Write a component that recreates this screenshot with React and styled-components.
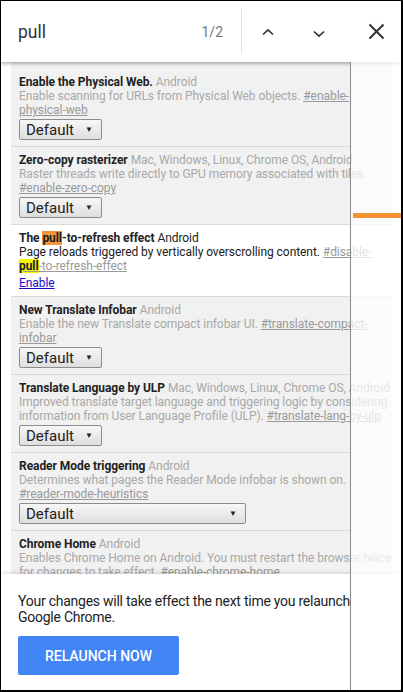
import React from "react";
import styled, { createGlobalStyle } from "styled-components";

const GlobalStyle = createGlobalStyle`
  body {
    margin: 0;
    font-family: Roboto, "Noto Sans", Arial, sans-serif;
    background: #fff;
  }
`;

const flags = [
  {
    title: "Enable the Physical Web.",
    platforms: "Android",
    desc: "Enable scanning for URLs from Physical Web objects.",
    hash: "#enable-physical-web",
    select: "narrow",
  },
  {
    title: "Zero-copy rasterizer",
    platforms: "Mac, Windows, Linux, Chrome OS, Android",
    desc: "Raster threads write directly to GPU memory associated with tiles.",
    hash: "#enable-zero-copy",
    select: "narrow",
  },
  { active: true },
  {
    title: "New Translate Infobar",
    platforms: "Android",
    desc: "Enable the new Translate compact infobar UI.",
    hash: "#translate-compact-infobar",
    select: "narrow",
  },
  {
    title: "Translate Language by ULP",
    platforms: "Mac, Windows, Linux, Chrome OS, Android",
    desc: "Improved translate target language and triggering logic by considering information from User Language Profile (ULP).",
    hash: "#translate-lang-by-ulp",
    select: "narrow",
  },
  {
    title: "Reader Mode triggering",
    platforms: "Android",
    desc: "Determines what pages the Reader Mode infobar is shown on.",
    hash: "#reader-mode-heuristics",
    select: "wide",
  },
  {
    title: "Chrome Home",
    platforms: "Android",
    desc: "Enables Chrome Home on Android. You must restart the browser twice for changes to take effect.",
    hash: "#enable-chrome-home",
  },
];

const App = () => (
  <>
    <GlobalStyle />
    <Frame>
      <FindBar>
        <Query>pull</Query>
        <Count>1/2</Count>
        <Divider />
        <IconButton $w={52}>
          <svg width="12" height="8" viewBox="0 0 12 8">
            <polyline points="1,6.5 6,1.8 11,6.5" fill="none" stroke="#333" strokeWidth="1.7" />
          </svg>
        </IconButton>
        <IconButton $w={50} $down>
          <svg width="12" height="8" viewBox="0 0 12 8">
            <polyline points="1,1.5 6,6.2 11,1.5" fill="none" stroke="#333" strokeWidth="1.7" />
          </svg>
        </IconButton>
        <IconButton $w={57} $pad={7}>
          <svg width="17" height="17" viewBox="0 0 17 17">
            <path d="M1.5 1.5 L15.5 15.5 M15.5 1.5 L1.5 15.5" stroke="#333" strokeWidth="2" />
          </svg>
        </IconButton>
      </FindBar>

      <List>
        <Entries>
          {flags.map((f, i) =>
            f.active ? (
              <Entry key={i} $active>
                <Title>
                  The <Current>pull</Current>-to-refresh effect <Platform $active>Android</Platform>
                </Title>
                <Desc $active>
                  Page reloads triggered by vertically overscrolling content.{" "}
                  <Hash>
                    #disable-<Match>pull</Match>-to-refresh-effect
                  </Hash>
                </Desc>
                <EnableLink>Enable</EnableLink>
              </Entry>
            ) : (
              <Entry key={i}>
                <Title>
                  {f.title} <Platform>{f.platforms}</Platform>
                </Title>
                <Desc>
                  {f.desc} <Hash>{f.hash}</Hash>
                </Desc>
                {f.select && (
                  <Select $wide={f.select === "wide"}>
                    <span>Default</span>
                    <Arrow>▼</Arrow>
                  </Select>
                )}
              </Entry>
            )
          )}
        </Entries>
      </List>

      <Infobar>
        <InfoText>
          Your changes will take effect the next time you relaunch Google Chrome.
        </InfoText>
        <Relaunch>RELAUNCH NOW</Relaunch>
      </Infobar>

      <Overscroll>
        <Glow />
      </Overscroll>
    </Frame>
  </>
);

export default App;

const Frame = styled.div`
  position: relative;
  box-sizing: border-box;
  width: 403px;
  height: 692px;
  border: solid #000;
  border-width: 1px 2px 2px 1px;
  display: flex;
  flex-direction: column;
  overflow: hidden;
  background: #fff;
`;

const FindBar = styled.div`
  position: relative;
  z-index: 2;
  flex-shrink: 0;
  height: 61px;
  display: flex;
  align-items: center;
  background: #fff;
  box-shadow: 0 2px 3px rgba(0, 0, 0, 0.28);
`;

const Query = styled.div`
  flex: 1;
  padding-left: 17px;
  font-size: 17.5px;
  color: #333;
  margin-top: 1px;
`;

const Count = styled.div`
  margin-right: 18px;
  font-size: 14px;
  color: #777;
`;

const Divider = styled.div`
  width: 1px;
  align-self: stretch;
  margin: 8px 0 9px;
  background: #e2e2e2;
`;

const IconButton = styled.div`
  width: ${(p) => p.$w}px;
  box-sizing: border-box;
  padding-left: ${(p) => p.$pad || 0}px;
  display: flex;
  justify-content: center;
  align-items: center;
  margin-top: ${(p) => (p.$down ? 4 : 0)}px;
`;

const List = styled.div`
  flex: 1;
  overflow: hidden;
  padding: 0 9px 0 10px;
`;

const Entries = styled.div`
  background: #f1f1f1;
  padding-top: 7px;
`;

const Entry = styled.div`
  padding: 6px 0 6px 8px;
  border-bottom: 1px solid #dadada;
  background: ${(p) => (p.$active ? "#fff" : "transparent")};
  font-size: 12px;
  letter-spacing: -0.06px;
  line-height: 14px;
`;

const Title = styled.div`
  font-weight: bold;
  color: #222;
`;

const Platform = styled.span`
  font-weight: normal;
  color: ${(p) => (p.$active ? "#222" : "#a8a8a8")};
`;

const Desc = styled.div`
  color: ${(p) => (p.$active ? "#222" : "#a8a8a8")};
`;

const Hash = styled.span`
  color: #999;
  text-decoration: underline;
`;

const Current = styled.span`
  background: #f4943a;
`;

const Match = styled.span`
  background: #f4f400;
  color: #222;
  font-weight: bold;
`;

const EnableLink = styled.div`
  margin-top: 3px;
  color: #1a0dce;
  text-decoration: underline;
  line-height: 14px;
`;

const Select = styled.div`
  box-sizing: border-box;
  margin-top: 2px;
  width: ${(p) => (p.$wide ? 227 : 83)}px;
  height: 21px;
  padding: 0 8px 0 6px;
  display: flex;
  align-items: center;
  justify-content: space-between;
  border: 1px solid #8c8c8c;
  border-radius: 2px;
  background: linear-gradient(#f7f7f7, #dedede);
  font-size: 15px;
  letter-spacing: 0;
  color: #222;
`;

const Arrow = styled.span`
  font-size: 8px;
  color: #222;
`;

const Infobar = styled.div`
  position: relative;
  z-index: 2;
  flex-shrink: 0;
  height: 116px;
  box-sizing: border-box;
  padding: 19px 10px 0 17px;
  background: #fff;
  box-shadow: 0 -2px 3px rgba(0, 0, 0, 0.1);
`;

const InfoText = styled.div`
  font-size: 14px;
  letter-spacing: -0.25px;
  line-height: 16px;
  color: #222;
`;

const Relaunch = styled.div`
  margin-top: 11px;
  width: 161px;
  height: 39px;
  display: flex;
  align-items: center;
  justify-content: center;
  background: #4285f4;
  border-radius: 2px;
  color: #fff;
  font-size: 14px;
  font-weight: 500;
`;

const Overscroll = styled.div`
  position: absolute;
  z-index: 3;
  left: 349px;
  top: 61px;
  right: 0;
  bottom: 0;
  background: rgba(255, 255, 255, 0.72);
  border-left: 1px solid #8a8a8a;
`;

const Glow = styled.div`
  margin-top: 151px;
  margin-left: 2px;
  height: 5px;
  background: #f39232;
`;
